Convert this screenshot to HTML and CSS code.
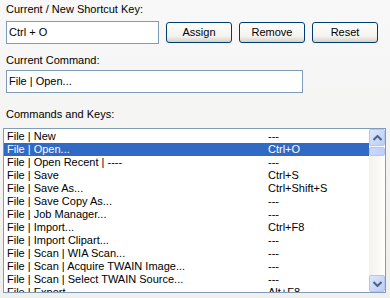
FILE: index.html
```html
<!DOCTYPE html>
<html lang="en">
<head>
<meta charset="utf-8" />
<title>Shortcut Keys</title>
<link rel="stylesheet" href="styles.css">
</head>
<body>
<div class="panel">
    <div class="label">Current / New Shortcut Key:</div>
    <div class="keyrow">
        <div class="field key">Ctrl + O</div>
        <div class="button">Assign</div>
        <div class="button">Remove</div>
        <div class="button">Reset</div>
    </div>

    <div class="label second">Current Command:</div>
    <div class="field command">File | Open...</div>

    <div class="label third">Commands and Keys:</div>
</div>

<!-- list of commands: -->
<div class="listbox">
    <ul class="items">
        <li><span class="cmd">File | New</span><span class="keys">---</span></li>
        <li class="selected"><span class="cmd">File | Open...</span><span class="keys">Ctrl+O</span></li>
        <li><span class="cmd">File | Open Recent | ----</span><span class="keys">---</span></li>
        <li><span class="cmd">File | Save</span><span class="keys">Ctrl+S</span></li>
        <li><span class="cmd">File | Save As...</span><span class="keys">Ctrl+Shift+S</span></li>
        <li><span class="cmd">File | Save Copy As...</span><span class="keys">---</span></li>
        <li><span class="cmd">File | Job Manager...</span><span class="keys">---</span></li>
        <li><span class="cmd">File | Import...</span><span class="keys">Ctrl+F8</span></li>
        <li><span class="cmd">File | Import Clipart...</span><span class="keys">---</span></li>
        <li><span class="cmd">File | Scan | WIA Scan...</span><span class="keys">---</span></li>
        <li><span class="cmd">File | Scan | Acquire TWAIN Image...</span><span class="keys">---</span></li>
        <li><span class="cmd">File | Scan | Select TWAIN Source...</span><span class="keys">---</span></li>
        <li><span class="cmd">File | Export</span><span class="keys">Alt+F8</span></li>
    </ul>
    <div class="scrollbar">
        <div class="arrow">
            <svg width="9" height="6" viewBox="0 0 9 6"><path d="M0.5 5 L4.5 1 L8.5 5" fill="none" stroke="#4d6185" stroke-width="2"/></svg>
        </div>
        <div class="thumb"></div>
        <div class="track"></div>
        <div class="arrow">
            <svg width="9" height="6" viewBox="0 0 9 6"><path d="M0.5 1 L4.5 5 L8.5 1" fill="none" stroke="#4d6185" stroke-width="2"/></svg>
        </div>
    </div>
</div>
</body>
</html>
```

FILE: styles.css
```css
html, body {
    margin: 0;
    height: 100%;
}
body {
    background: linear-gradient(#f8f8f9, #f0efeb);
    font-family: "Liberation Sans", Arial, sans-serif;
    font-size: 11px;
    color: #000;
    overflow: hidden;
}

.panel { padding: 3px 0 0 6px; }

.label { height: 13px; line-height: 13px; }
.label.second { margin-top: 10px; }
.label.third { margin-top: 15px; }

.keyrow {
    display: flex;
    align-items: center;
    margin-top: 5px;
}

.field {
    box-sizing: border-box;
    height: 23px;
    line-height: 21px;
    border: 1px solid #7f9db9;
    background: #fff;
    padding-left: 2px;
}
.key { width: 153px; margin-right: 7px; }
.command { width: 297px; margin-top: 3px; }

.button {
    box-sizing: border-box;
    width: 66px;
    height: 21px;
    line-height: 19px;
    margin-right: 7px;
    border: 1px solid #003c74;
    border-radius: 3px;
    background: linear-gradient(#fefefd, #f4f3ee 70%, #d6d0c5);
    text-align: center;
}

/* list box: */
.listbox {
    box-sizing: border-box;
    display: flex;
    margin: 7px 0 0 3px;
    width: 383px;
    height: 165px;
    border: 1px solid #7f9db9;
    background: #fff;
    padding: 1px 0 0 0;
}
.items {
    flex: 1;
    margin: 0;
    padding: 0;
    list-style: none;
    overflow: hidden;
}
.items li {
    display: flex;
    height: 13px;
    line-height: 13px;
    padding-left: 3px;
    white-space: nowrap;
}
.items li.selected { background: #316ac5; color: #fff; }
.cmd { width: 261px; }

.scrollbar {
    width: 16px;
    display: flex;
    flex-direction: column;
    background: linear-gradient(90deg, #f3f1ec, #fefefb);
    margin-top: -1px;
}
.arrow {
    box-sizing: border-box;
    height: 17px;
    border: 1px solid #b3c6f1;
    border-radius: 2px;
    background: linear-gradient(135deg, #dde7fd, #b9cdf9);
    display: flex;
    align-items: center;
    justify-content: center;
}
.thumb {
    box-sizing: border-box;
    height: 9px;
    margin-top: 1px;
    border: 1px solid #b3c6f1;
    border-radius: 2px;
    background: linear-gradient(90deg, #c9d8fc, #bdd0fa);
}
.track { flex: 1; }
```
